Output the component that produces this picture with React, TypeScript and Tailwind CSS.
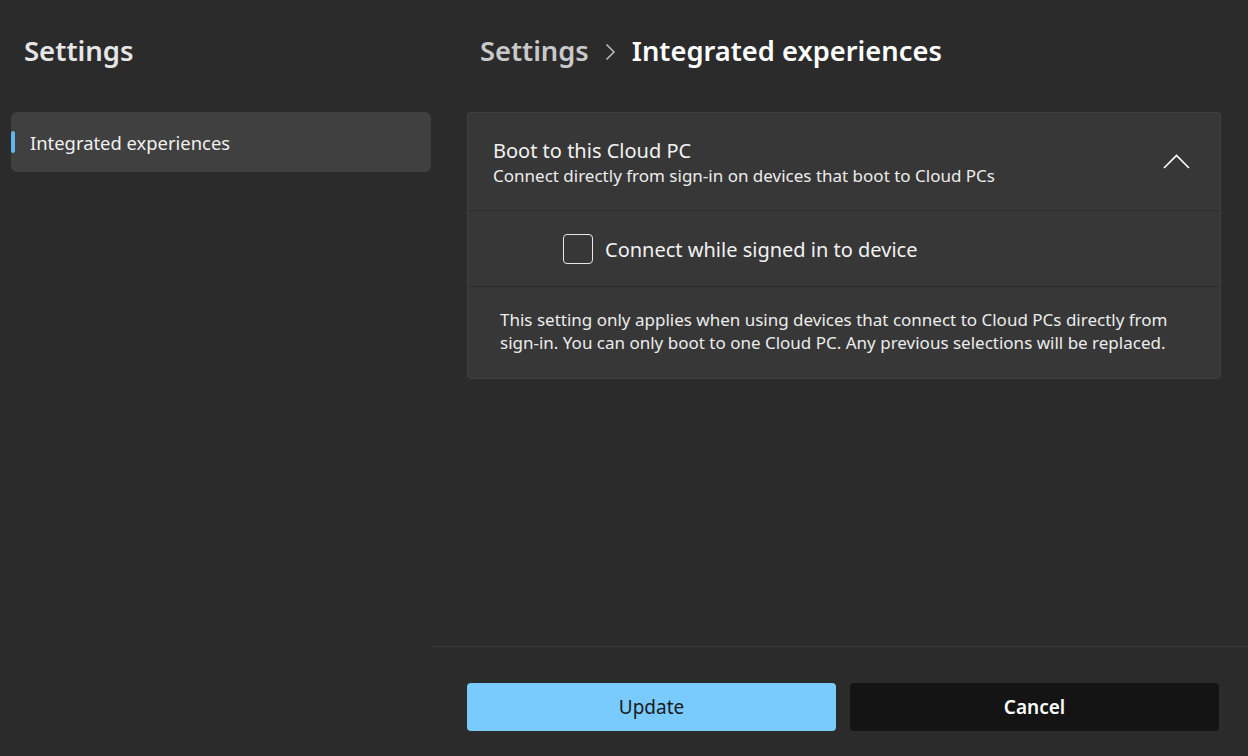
import React from "react";

export default function App() {
  return (
    <div
      className="w-[1248px] h-[756px] bg-[#2b2b2b] flex text-white overflow-hidden"
      style={{ fontFamily: '"Noto Sans", "Open Sans", sans-serif' }}
    >
      {/* Sidebar */}
      <div className="w-[431px] shrink-0 flex flex-col pl-[11px]">
        <div className="h-[112px] pl-[13px] pt-[31px]">
          <div className="text-[27.5px] leading-[40px] font-semibold text-[#e6e6e6]">Settings</div>
        </div>
        <div className="h-[60px] w-[420px] rounded-[6px] bg-[#404040] flex items-center relative">
          <div className="absolute left-0 top-[19px] w-[4px] h-[22px] rounded-full bg-[#60b6ea]" />
          <span className="pl-[19px] text-[18.4px] leading-[26px] pt-[1px] text-[#f0f0f0]">Integrated experiences</span>
        </div>
      </div>

      {/* Main */}
      <div className="flex-1 flex flex-col">
        <div className="flex-1 pl-[36px] pr-[27px]">
          <div className="h-[112px] pt-[31px] pl-[13px] flex items-start gap-[16px]">
            <span className="text-[27.3px] leading-[40px] font-semibold text-[#c9c9c9]">Settings</span>
            <svg width="11" height="18" viewBox="0 0 11 18" className="mt-[12px]">
              <path d="M1.5 1.5 L9 9 L1.5 16.5" fill="none" stroke="#bdbdbd" strokeWidth="1.5" />
            </svg>
            <span className="text-[27.3px] leading-[40px] font-semibold text-white">Integrated experiences</span>
          </div>

          <div className="w-[754px] rounded-[4px] border border-[#414141] bg-[#373737] flex flex-col">
            <div className="h-[98px] flex items-center pl-[25px] pr-[30px] border-b border-[#2c2c2c]">
              <div className="flex-1 flex flex-col pt-[3px]">
                <span className="text-[20px] leading-[26px] text-[#f2f2f2]">Boot to this Cloud PC</span>
                <span className="text-[17px] leading-[24px] text-[#ececec]">
                  Connect directly from sign-in on devices that boot to Cloud PCs
                </span>
              </div>
              <svg width="27" height="15" viewBox="0 0 27 15">
                <path d="M1 14 L13.5 1.5 L26 14" fill="none" stroke="#ffffff" strokeWidth="1.6" />
              </svg>
            </div>
            <div className="h-[76px] flex items-center pl-[95px] border-b border-[#2c2c2c]">
              <div className="w-[30px] h-[30px] rounded-[4px] border-[1.5px] border-[#e8e8e8] mt-[1px]" />
              <span className="ml-[12px] text-[20px] leading-[28px] pt-[2px] text-[#f2f2f2]">Connect while signed in to device</span>
            </div>
            <div className="h-[91px] flex items-center pl-[32px] pb-[4px]">
              <p className="w-[695px] text-[17px] leading-[23px] text-[#ececec]">
                This setting only applies when using devices that connect to Cloud PCs directly from sign-in. You can only boot to one Cloud PC. Any previous selections will be replaced.
              </p>
            </div>
          </div>
        </div>

        <div className="h-[110px] border-t border-[#3c3c3c] flex items-start pt-[36px] pl-[36px] gap-[14px]">
          <button className="w-[369px] h-[48px] rounded-[4px] bg-[#78cbfc] text-[#1a1a1a] text-[19px]">
            Update
          </button>
          <button className="w-[369px] h-[48px] rounded-[4px] bg-[#141414] text-white text-[19px] font-semibold">
            Cancel
          </button>
        </div>
      </div>
    </div>
  );
}
